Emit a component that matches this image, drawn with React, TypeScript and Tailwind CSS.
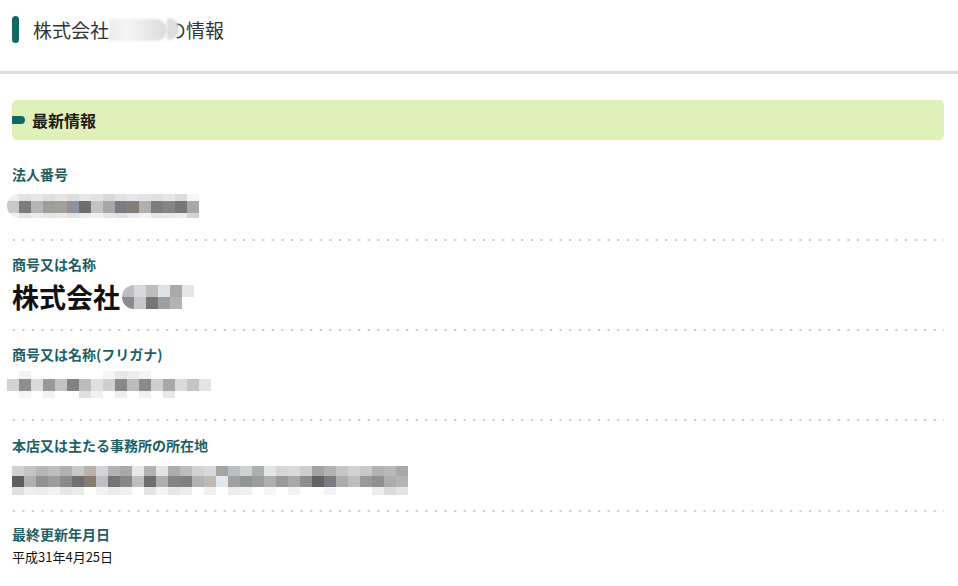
import React from 'react';

type Row = { h: string; cells: string[] };

const font = { fontFamily: '"Noto Sans CJK JP", "Liberation Sans", sans-serif' };

// mosaic blocks that hide the real values in the screenshot
const Mosaic: React.FC<{ rows: Row[]; className?: string }> = ({ rows, className }) => (
  <div className={`flex flex-col blur-[0.6px] ${className ?? ''}`}>
    {rows.map((row, i) => (
      <div key={i} className={`flex ${row.h}`}>
        {row.cells.map((c, j) => (
          <div key={j} className={`w-[12px] shrink-0 ${c}`} />
        ))}
      </div>
    ))}
  </div>
);

const corpNo: Row[] = [
  { h: 'h-[7px]', cells: ['bg-[#eeeeee]', 'bg-[#e2e2e2]', 'bg-[#e6e6e6]', 'bg-[#e0e0e0]', 'bg-[#e4e4e4]', 'bg-[#dedede]', 'bg-[#e8e8e8]', 'bg-[#e3e3e3]', 'bg-[#d8d8dc]', 'bg-[#e2e2e2]', 'bg-[#e8e8e8]', 'bg-[#e4e4e4]', 'bg-[#e0e0e0]', 'bg-[#e6e6e6]', 'bg-[#dcdcdc]', 'bg-[#f6f6f6]'] },
  { h: 'h-[12px]', cells: ['bg-[#c8c8c8]', 'bg-[#7c7c7c]', 'bg-[#b5b5b5]', 'bg-[#9d9d9d]', 'bg-[#a59f98]', 'bg-[#8e949c]', 'bg-[#6e6e6e]', 'bg-[#c3c3c3]', 'bg-[#a8a8a8]', 'bg-[#7b7b84]', 'bg-[#847d79]', 'bg-[#b0b0b0]', 'bg-[#7e7e7e]', 'bg-[#858585]', 'bg-[#777777]', 'bg-[#a8a8a8]'] },
  { h: 'h-[5px]', cells: ['bg-[#f0f0f0]', 'bg-[#e4e4e4]', 'bg-[#eaeaea]', 'bg-[#e6e6e6]', 'bg-[#e8e8e8]', 'bg-[#e2e2e2]', 'bg-[#ececec]', 'bg-[#f0f0f0]', 'bg-[#e6e6e6]', 'bg-[#e0e0e4]', 'bg-[#eaeaea]', 'bg-[#f2f2f2]', 'bg-[#e6e6e6]', 'bg-[#e8e8e8]', 'bg-[#ececec]', 'bg-[#d4d4d4]'] },
];

const nameRest: Row[] = [
  { h: 'h-[12px]', cells: ['bg-[#bdbdbd]', 'bg-[#d8d8dc]', 'bg-[#bdbdbd]', 'bg-[#dfe3e6]', 'bg-[#a9a9a9]', 'bg-[#e6e6e6]'] },
  { h: 'h-[12px]', cells: ['bg-[#8a8a8a]', 'bg-[#c8c8cc]', 'bg-[#767676]', 'bg-[#9aa0a3]', 'bg-[#b4b4b4]', 'bg-[#ffffff]'] },
];

const kana: Row[] = [
  { h: 'h-[8px]', cells: ['bg-[#ffffff]', 'bg-[#f2f2f2]', 'bg-[#ffffff]', 'bg-[#ffffff]', 'bg-[#ffffff]', 'bg-[#ffffff]', 'bg-[#ffffff]', 'bg-[#ffffff]', 'bg-[#f6f6f6]', 'bg-[#e8e8e8]', 'bg-[#ececec]', 'bg-[#f4f4f4]', 'bg-[#ffffff]', 'bg-[#ffffff]', 'bg-[#ffffff]', 'bg-[#ffffff]', 'bg-[#ffffff]'] },
  { h: 'h-[12px]', cells: ['bg-[#d2d2d2]', 'bg-[#8e8e8e]', 'bg-[#dadada]', 'bg-[#999999]', 'bg-[#c4c4c4]', 'bg-[#828282]', 'bg-[#bcbcbc]', 'bg-[#e0e0e0]', 'bg-[#cfcfcf]', 'bg-[#888888]', 'bg-[#bcbcbc]', 'bg-[#8a8a8a]', 'bg-[#cfcfcf]', 'bg-[#a8a8a8]', 'bg-[#dadada]', 'bg-[#c4c4c4]', 'bg-[#e4e4e4]'] },
  { h: 'h-[7px]', cells: ['bg-[#ffffff]', 'bg-[#f4f4f4]', 'bg-[#ffffff]', 'bg-[#f2f2f2]', 'bg-[#ffffff]', 'bg-[#ffffff]', 'bg-[#e0e0e0]', 'bg-[#f0f0f0]', 'bg-[#ffffff]', 'bg-[#eeeeee]', 'bg-[#ffffff]', 'bg-[#f0f0f0]', 'bg-[#ffffff]', 'bg-[#e8e8e8]', 'bg-[#ffffff]', 'bg-[#ffffff]', 'bg-[#ffffff]'] },
];

const addrTop = ['bg-[#d0d0d0]', 'bg-[#c4c4c4]', 'bg-[#b6b6b6]', 'bg-[#bebebe]', 'bg-[#b0b0b0]', 'bg-[#c8c8c8]', 'bg-[#b8b2aa]', 'bg-[#d2d4d8]', 'bg-[#b2b2b2]', 'bg-[#a8a8a8]', 'bg-[#e8e8e8]', 'bg-[#b2b2b2]', 'bg-[#e2e2e2]', 'bg-[#aeacae]', 'bg-[#bcbcbc]', 'bg-[#d2d2d2]', 'bg-[#d8d8d8]', 'bg-[#a4a4a4]', 'bg-[#b8c0c4]', 'bg-[#d0d0d0]', 'bg-[#aab0b0]', 'bg-[#e4e4e4]', 'bg-[#d6d6d6]', 'bg-[#dadada]', 'bg-[#cecece]', 'bg-[#a2a2a2]', 'bg-[#b2b2b2]', 'bg-[#c6c6c6]', 'bg-[#d2d2d2]', 'bg-[#c8c8c8]', 'bg-[#b2b2b2]', 'bg-[#b8b8b8]', 'bg-[#a8a8a8]'];
const addrMid = ['bg-[#5e5e5e]', 'bg-[#b0b0b0]', 'bg-[#929292]', 'bg-[#9c9c9c]', 'bg-[#8a8a8a]', 'bg-[#707070]', 'bg-[#867c70]', 'bg-[#bcc0c6]', 'bg-[#747474]', 'bg-[#868686]', 'bg-[#bebebe]', 'bg-[#6e6e6e]', 'bg-[#aeaeae]', 'bg-[#868286]', 'bg-[#808080]', 'bg-[#b2b2b2]', 'bg-[#c0b8b2]', 'bg-[#e4e8ee]', 'bg-[#a0a0a0]', 'bg-[#8e9698]', 'bg-[#9c9c9c]', 'bg-[#aeaeae]', 'bg-[#9a9a9a]', 'bg-[#a8a8a8]', 'bg-[#8e8e8e]', 'bg-[#64625e]', 'bg-[#787c82]', 'bg-[#acacac]', 'bg-[#bebebe]', 'bg-[#9a9a9a]', 'bg-[#909090]', 'bg-[#acacac]', 'bg-[#b4b4b4]'];
const addrBot = ['bg-[#e0e0e0]', 'bg-[#eeeeee]', 'bg-[#ececec]', 'bg-[#f2f2f2]', 'bg-[#e6e6e6]', 'bg-[#eaeaea]', 'bg-[#ffffff]', 'bg-[#f2f2f2]', 'bg-[#eaeaea]', 'bg-[#f0f0f0]', 'bg-[#ffffff]', 'bg-[#e4e4e4]', 'bg-[#f4f4f4]', 'bg-[#e6e6e6]', 'bg-[#ededed]', 'bg-[#ffffff]', 'bg-[#f0f0f0]', 'bg-[#ffffff]', 'bg-[#ececec]', 'bg-[#f0f0f0]', 'bg-[#ffffff]', 'bg-[#f6f6f6]', 'bg-[#ffffff]', 'bg-[#f2f2f2]', 'bg-[#ffffff]', 'bg-[#ffffff]', 'bg-[#f4f4f4]', 'bg-[#ffffff]', 'bg-[#ffffff]', 'bg-[#ffffff]', 'bg-[#ececec]', 'bg-[#dadada]', 'bg-[#e4e4e4]'];
const address: Row[] = [
  { h: 'h-[10px]', cells: addrTop },
  { h: 'h-[11px]', cells: addrMid },
  { h: 'h-[8px]', cells: addrBot },
];

const Dots = () => (
  <div className="h-[4px] bg-[radial-gradient(circle,#cdcdcd_1px,transparent_1.6px)] bg-[length:9.6px_4px] bg-[position:-3px_0]" />
);

const Label: React.FC<{ children: React.ReactNode }> = ({ children }) => (
  <div className="text-[14px] leading-[20px] font-bold text-[#1d5f64]">{children}</div>
);

export default function App() {
  return (
    <div className="w-[958px] h-[586px] bg-white overflow-hidden" style={font}>
      {/* page title */}
      <div className="flex items-center gap-[14px] pl-[12px] pt-[16px] pb-[28px]">
        <div className="w-[7px] h-[27px] rounded-full bg-[#0f6a62]" />
        <h1 className="flex items-center text-[19px] leading-[27px] text-[#333333]">
          <span>株式会社</span>
          <span className="inline-block w-[58px] h-[22px] rounded-r-full bg-[linear-gradient(90deg,#ececf0,#f4f4f4_30%,#ebebeb_60%,#dcdcdc)] blur-[0.8px]" />
          <span className="relative">
            の
            <span className="absolute left-0 top-[2px] w-[12px] h-[22px] rounded-r-full bg-[#dedede] blur-[0.8px]" />
          </span>
          <span>情報</span>
        </h1>
      </div>
      <div className="h-[3px] bg-[#dcdcdc]" />

      <div className="pl-[12px] pr-[14px]">
        {/* section header */}
        <div className="mt-[26px] h-[40px] rounded-[5px] bg-[#dff0b9] flex items-center gap-[7px]">
          <div className="w-[13px] h-[8px] rounded-r-full bg-[#126a66]" />
          <h2 className="text-[16px] font-bold text-[#1c1c1c]">最新情報</h2>
        </div>

        <div className="pt-[24px] pb-[20px]">
          <Label>法人番号</Label>
          <Mosaic rows={corpNo} className="mt-[10px] -ml-[5px] w-fit rounded-l-full overflow-hidden" />
        </div>
        <Dots />

        <div className="pt-[12px] pb-[15px]">
          <Label>商号又は名称</Label>
          <div className="mt-[7px] flex items-center h-[32px]">
            <span className="text-[27px] leading-[32px] font-bold text-[#111111]">株式会社</span>
            <Mosaic rows={nameRest} className="ml-[2px] rounded-l-full overflow-hidden" />
          </div>
        </div>
        <Dots />

        <div className="pt-[12px] pb-[20px]">
          <Label>商号又は名称(フリガナ)</Label>
          <Mosaic rows={kana} className="mt-[7px] -ml-[5px]" />
        </div>
        <Dots />

        <div className="pt-[13px] pb-[14px]">
          <Label>本店又は主たる事務所の所在地</Label>
          <Mosaic rows={address} className="mt-[11px]" />
        </div>
        <Dots />

        <div className="pt-[11px]">
          <Label>最終更新年月日</Label>
          <div className="mt-[4px] text-[13px] leading-[18px] text-[#111111]">平成31年4月25日</div>
        </div>
      </div>
    </div>
  );
}
